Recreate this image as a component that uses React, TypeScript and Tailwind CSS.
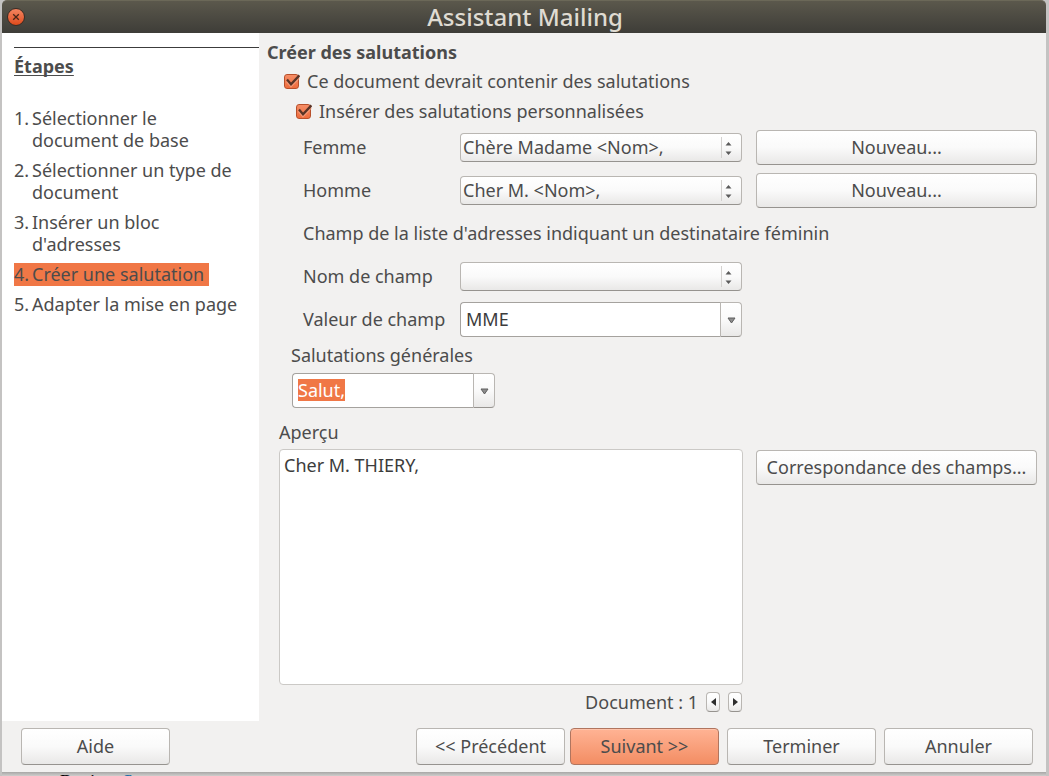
import { useEffect, useRef, useState } from 'react'
import type { ReactNode } from 'react'
import clsx from 'clsx'

const steps = [
  'Sélectionner le document de base',
  'Sélectionner un type de document',
  "Insérer un bloc d'adresses",
  'Créer une salutation',
  'Adapter la mise en page',
]

const raised =
  'border border-[#b9b6b2] border-b-[#96938f] bg-linear-to-b from-white via-[#fafafa] to-[#e9e8e7]'

function Button({
  children,
  primary,
  className,
}: {
  children: ReactNode
  primary?: boolean
  className?: string
}) {
  return (
    <button
      type="button"
      className={clsx(
        'rounded-[4px] pb-[2px] text-center',
        primary
          ? 'border border-[#b0755f] bg-linear-to-b from-[#ffb394] to-[#f38d63] shadow-[inset_0_1px_0_#ffc4ab]'
          : raised,
        className,
      )}
    >
      {children}
    </button>
  )
}

function CheckBox({ id, label }: { id: string; label: string }) {
  const [checked, setChecked] = useState(true)

  return (
    <div className="flex h-[30px] items-center gap-[7px]">
      <span className="relative size-4">
        <input
          id={id}
          type="checkbox"
          checked={checked}
          onChange={(e) => setChecked(e.target.checked)}
          className="mt-px block size-[15px] appearance-none rounded-[3px] border border-[#a8a5a1] bg-white checked:border-[#b8502b] checked:bg-linear-to-b checked:from-[#f58d66] checked:to-[#ee6d3d]"
        />
        {checked && (
          <svg viewBox="0 0 16 16" className="pointer-events-none absolute inset-0 size-4" fill="none">
            <path d="M3.2 8 7 12.6 15 4" stroke="#f9b195" strokeWidth="3" opacity=".6" />
            <path d="M3 6.6 7 11.2 15.4 2.4" stroke="#5a3426" strokeWidth="2.3" />
          </svg>
        )}
      </span>
      <label htmlFor={id}>{label}</label>
    </div>
  )
}

function Select({ id, options }: { id: string; options: string[] }) {
  return (
    <div className="relative">
      <select
        id={id}
        className={clsx(
          'block h-[29px] w-full appearance-none rounded-[4px] pr-7 pb-[2px] pl-[2px]',
          raised,
        )}
      >
        {options.map((o) => (
          <option key={o}>{o}</option>
        ))}
      </select>
      <span className="pointer-events-none absolute inset-y-1 right-0 flex w-[21px] items-center border-l border-[#d3d1cf] pt-px pl-[3px]">
        <svg width="7" height="13" viewBox="0 0 7 13" fill="#5b5b5b">
          <path d="M.5 3.5h6L3.5 0zM.5 9.5h6L3.5 13z" />
        </svg>
      </span>
    </div>
  )
}

function ComboBox({
  id,
  value,
  selected,
  className,
}: {
  id: string
  value: string
  selected?: boolean
  className?: string
}) {
  const ref = useRef<HTMLInputElement>(null)

  useEffect(() => {
    if (selected) {
      ref.current?.focus()
      ref.current?.select()
    }
  }, [selected])

  return (
    <div className={clsx('flex h-[35px]', className)}>
      <input
        ref={ref}
        id={id}
        defaultValue={value}
        className="min-w-0 flex-1 rounded-l-[4px] border border-r-0 border-[#a5a29e] bg-white pb-[2px] pl-[5px] text-[#3c3c3c] outline-none selection:bg-[#f07746] selection:text-white"
      />
      <button
        type="button"
        aria-label="Ouvrir la liste"
        className={clsx('flex w-[22px] items-center justify-center rounded-r-[4px] pt-[2px]', raised)}
      >
        <svg width="9" height="7" viewBox="0 0 9 7" fill="#8d8d8d" stroke="#5f5f5f">
          <path d="M1 1h7L4.5 6z" />
        </svg>
      </button>
    </div>
  )
}

function TitleBar() {
  return (
    <header className="flex h-[33px] items-center rounded-t-[5px] border-t border-[#6b6858] bg-linear-to-b from-[#5b584c] to-[#3e3d38] px-[5px]">
      <button
        type="button"
        aria-label="Fermer"
        className="flex size-[18px] items-center justify-center rounded-full border border-[#3a2c25] bg-linear-to-b from-[#f4845f] to-[#df4a18]"
      >
        <svg width="8" height="8" viewBox="0 0 8 8" stroke="#4a2618" strokeWidth="1.3">
          <path d="M1.2 1.2l5.6 5.6M6.8 1.2L1.2 6.8" />
        </svg>
      </button>
      <h1 className="flex-1 pr-4 text-center text-[24px] leading-8 font-medium text-[#dfdbd2]">
        Assistant Mailing
      </h1>
    </header>
  )
}

function Steps() {
  const current = 3

  return (
    <nav className="w-[257px] shrink-0 bg-white pt-[14px] pl-3">
      <h2 className="border-t border-[#3c3c3c] pt-[7px] font-bold underline decoration-1 underline-offset-2 [text-decoration-skip-ink:none]">
        Étapes
      </h2>
      <ol className="mt-[30px] flex flex-col items-start gap-2 pr-4">
        {steps.map((step, i) => (
          <li
            key={step}
            className={clsx(
              'flex',
              i === current && 'bg-[#f07746] pr-[5px] shadow-[0_1px_0_#f07746]',
            )}
            aria-current={i === current ? 'step' : undefined}
          >
            <span className="w-[18px] shrink-0">{i + 1}.</span>
            <span>{step}</span>
          </li>
        ))}
      </ol>
    </nav>
  )
}

export default function App() {
  return (
    <div className="flex min-h-screen flex-col bg-[#c4c3c2] pr-[3px] pl-[2px] font-['Noto_Sans',sans-serif] text-[18px] leading-[22px] text-[#4c4c4c]">
      <TitleBar />
      <div className="flex flex-1 bg-[#f2f1f0]">
        <Steps />
        <main className="flex min-w-0 flex-1 flex-col pt-2 pr-[9px] pb-2 pl-2">
          <h2 className="font-bold">Créer des salutations</h2>
          <div className="mt-[3px] pl-[17px]">
            <CheckBox id="salutations" label="Ce document devrait contenir des salutations" />
          </div>
          <div className="pl-[29px]">
            <CheckBox id="personnalisees" label="Insérer des salutations personnalisées" />
          </div>

          <div className="mt-1 grid auto-rows-[35px] grid-cols-[157px_minmax(0,1fr)_295px] items-center gap-y-2 pl-9">
            <label htmlFor="femme" className="pb-[2px]">
              Femme
            </label>
            <Select id="femme" options={['Chère Madame <Nom>,']} />
            <Button className="ml-[14px] h-[35px]">Nouveau...</Button>

            <label htmlFor="homme" className="pb-[2px]">
              Homme
            </label>
            <Select id="homme" options={['Cher M. <Nom>,']} />
            <Button className="ml-[14px] h-[35px]">Nouveau...</Button>

            <p className="col-span-3 pb-[2px]">
              Champ de la liste d'adresses indiquant un destinataire féminin
            </p>

            <label htmlFor="champ" className="pb-[2px]">
              Nom de champ
            </label>
            <Select id="champ" options={['']} />
            <span />

            <label htmlFor="valeur" className="pb-[2px]">
              Valeur de champ
            </label>
            <ComboBox id="valeur" value="MME" />
          </div>

          <div className="mt-[7px] pl-6">
            <label htmlFor="generales">Salutations générales</label>
            <ComboBox id="generales" value="Salut," selected className="mt-[7px] ml-px w-[203px]" />
          </div>

          <div className="mt-[13px] grid flex-1 grid-cols-[minmax(0,1fr)_281px] grid-rows-[auto_1fr_auto] gap-x-[13px] pl-3">
            <label htmlFor="apercu" className="col-span-2">
              Aperçu
            </label>
            <textarea
              id="apercu"
              readOnly
              defaultValue="Cher M. THIERY,"
              className="mt-[6px] resize-none rounded-[4px] border border-[#cbc9c6] bg-white px-1 py-1 text-[#3c3c3c] outline-none"
            />
            <Button className="mt-[7px] h-[35px] self-start">Correspondance des champs...</Button>
            <div className="mt-[6px] flex items-center justify-end gap-2 pr-px">
              <span>Document : 1</span>
              <button
                type="button"
                aria-label="Document précédent"
                className={clsx('flex h-5 w-[14px] items-center justify-center rounded-[4px]', raised)}
              >
                <svg width="5" height="8" viewBox="0 0 5 8" fill="#2e2e2e">
                  <path d="M5 0v8L0 4z" />
                </svg>
              </button>
              <button
                type="button"
                aria-label="Document suivant"
                className={clsx('flex h-5 w-[14px] items-center justify-center rounded-[4px]', raised)}
              >
                <svg width="5" height="8" viewBox="0 0 5 8" fill="#2e2e2e">
                  <path d="M0 0v8l5-4z" />
                </svg>
              </button>
            </div>
          </div>
        </main>
      </div>

      <footer className="flex h-[51px] items-start gap-2 bg-[#f2f1f0] pt-[7px] pr-[13px] pl-[19px]">
        <Button className="h-[37px] w-[149px]">Aide</Button>
        <div className="ml-auto flex gap-[5px]">
          <Button className="h-[37px] w-[149px]">&lt;&lt; Précédent</Button>
          <Button primary className="h-[37px] w-[149px]">
            Suivant &gt;&gt;
          </Button>
        </div>
        <Button className="h-[37px] w-[149px]">Terminer</Button>
        <Button className="h-[37px] w-[149px]">Annuler</Button>
      </footer>
      <div className="h-1 overflow-hidden bg-linear-to-b from-[#a8a7a6] to-[#cfcecd] pl-[58px] font-['Liberation_Serif',serif] leading-5 text-black">
        Bonjour <span className="text-[#1f6fa5]">¶</span>
      </div>
    </div>
  )
}
